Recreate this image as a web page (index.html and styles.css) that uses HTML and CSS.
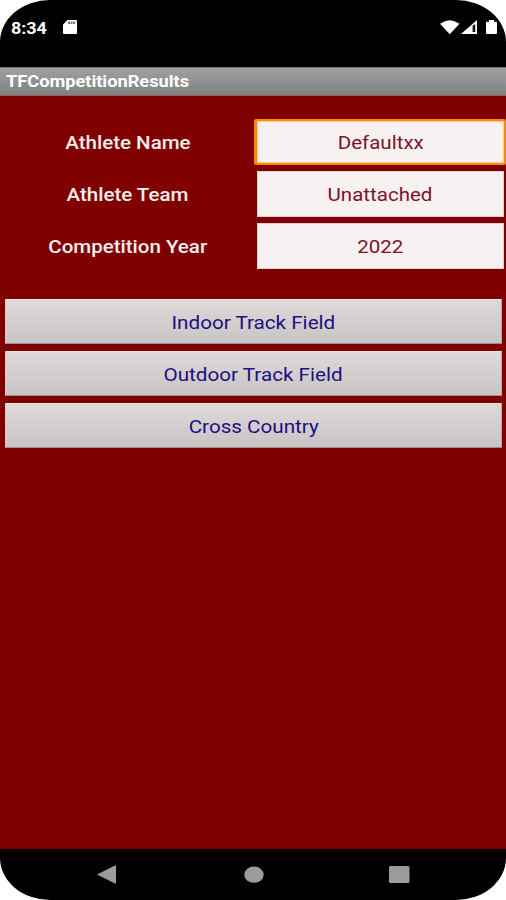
FILE: index.html
```html
<!DOCTYPE html>
<html lang="en">
<head>
<meta charset="utf-8">
<title>TFCompetitionResults</title>
<link rel="stylesheet" href="styles.css">
</head>
<body>
<div class="phone">
  <header class="status">
    <span class="clock"><span>8:34</span></span>
    <svg class="sd" width="14" height="15" viewBox="0 0 14 15"><path d="M4.500 0H13Q14 0 14 1V13Q14 14 13 14H1Q0 14 0 13V4.500Z" fill="#fff"/><path d="M5 2.800H12.500" stroke="#777" stroke-width="2.400" stroke-dasharray="2 .600"/></svg>
    <svg class="signals" width="58" height="15" viewBox="0 0 58 15"><path d="M0 3.800Q9.500 -3.500 19.500 3.800L9.700 14.200Z" fill="#fff"/><path d="M21 14L37 0V14Z" fill="#fff"/><path d="M32.600 5.800L35.200 4V12H32.600Z" fill="#111"/><path d="M46 2.500Q46 1.700 47 1.700H49V0H54V1.700H56Q57 1.700 57 2.500V13Q57 14 56 14H47Q46 14 46 13Z" fill="#fff"/></svg>
  </header>
  <h1 class="title"><span>TFCompetitionResults</span></h1>
  <main class="screen">
    <form class="fields">
      <label class="label"><span>Athlete Name</span></label><div class="field focused"><span>Defaultxx</span></div>
      <label class="label"><span>Athlete Team</span></label><div class="field"><span>Unattached</span></div>
      <label class="label"><span>Competition Year</span></label><div class="field"><span>2022</span></div>
    </form>
    <div class="actions">
      <button class="action"><span>Indoor Track Field</span></button>
      <button class="action"><span>Outdoor Track Field</span></button>
      <button class="action"><span>Cross Country</span></button>
    </div>
  </main>
  <nav class="nav">
    <svg width="19" height="19" viewBox="0 0 19 19"><path d="M0 9.500L18 .5Q19 0 19 1V18Q19 19 18 18.500Z" fill="#9c9c9c"/></svg>
    <svg width="20" height="19" viewBox="0 0 20 19"><ellipse cx="10" cy="9.700" rx="9.700" ry="8.100" fill="#9c9c9c"/></svg>
    <svg width="21" height="19" viewBox="0 0 21 19"><rect y="1" width="20.500" height="17" rx="1.500" fill="#9c9c9c"/></svg>
  </nav>
</div>
</body>
</html>
```
FILE: styles.css
```css
* { box-sizing: border-box; }
body { margin: 0; background: #fff; font-family: Roboto, sans-serif; }
.phone {
  display: flex;
  flex-direction: column;
  width: 506px;
  height: 900px;
  overflow: hidden;
  background: #000;
  border-radius: 50px / 42px;
}
.status { display: flex; height: 67px; padding: 20px 8px 0 11px; color: #fff; }
.clock { width: 52px; font-size: 16px; line-height: 17px; font-weight: 700; }
.clock span, .title span { display: inline-block; transform: scaleX(1.137); transform-origin: left; }
.clock span { transform: scaleX(1.12); }
.signals { margin-left: auto; }
.title {
  height: 29px;
  margin: 0;
  padding-left: 6px;
  border-top: 1px solid #777;
  border-bottom: 1px solid #94604f;
  background: linear-gradient(#a0a0a0, #7f8282);
  color: #fff;
  font-size: 16px;
  line-height: 27px;
}
.label span, .field span, .action span { display: inline-block; white-space: nowrap; transform: scaleX(1.14); }
.screen { flex: 1; background: #800000; }
.fields {
  display: grid;
  grid-template-columns: 248px 247px;
  grid-auto-rows: 46px;
  gap: 6px 9px;
  padding-top: 23px;
  height: 203px;
}
.label { text-align: center; color: #f7eeee; font-size: 18px; line-height: 47px; font-weight: 500; padding-left: 7px; }
.field {
  text-align: center;
  border: 1px solid #ddcfcf;
  background: #f8f1f1;
  color: #80102a;
  font-size: 18px;
  line-height: 45px;
}
.focused {
  margin: 0 -2px 0 -3px;
  border: 2px solid #f58b0c;
  border-left-width: 3px;
  border-radius: 2px;
  box-shadow: inset 0 0 0 1px #ffcf8c;
  line-height: 43px;
}
.actions { display: grid; gap: 7px; padding: 0 4px 0 5px; }
.action {
  height: 45px;
  padding: 2px 0 0;
  border: 1px solid;
  border-color: #efe4e2 #b9aaaa #a08c8c #d8cccc;
  border-radius: 1px;
  background: linear-gradient(#dfd9d9, #c9c3c3);
  color: #1b1180;
  font: 18px/41px Roboto, sans-serif;
}
.action span { transform: scaleX(1.147); }
.nav { display: flex; height: 51px; padding: 16px 0 0 97px; }
.nav svg + svg { margin-left: 128px; }
.nav svg + svg + svg { margin-left: 125px; }
```
